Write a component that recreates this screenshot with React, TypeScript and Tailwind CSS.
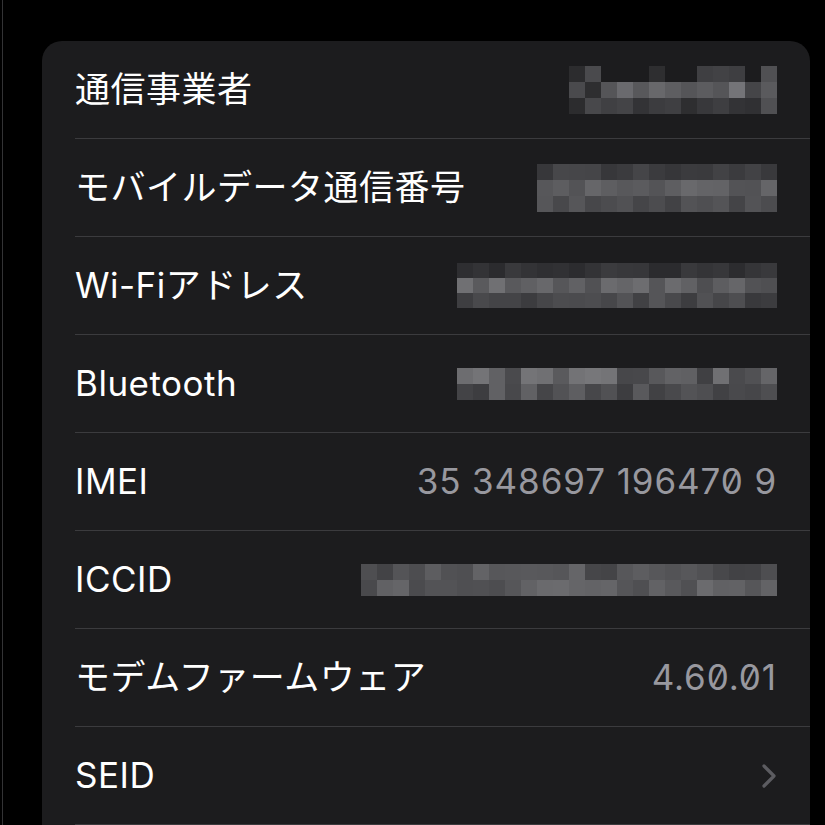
const carrier = [
  ["#2c2c2e", "#4a4a4d", "", "", "", "#2e2e30", "", "", "#3f3f42", "#424245", "#3e3e41", "", "#505053"],
  ["#4a4a4d", "#2e2e30", "#555558", "#6a6a6e", "#58585b", "#68686b", "#5e5e61", "#555558", "#5c5c5f", "#555558", "#747478", "#454548", "#5a5a5d"],
  ["#2c2c2e", "#48484b", "#404043", "#444447", "#333336", "#3c3c3f", "#3f3f42", "#2e2e30", "#38383b", "#3e3e41", "#333336", "#303033", "#505053"],
];

function noise(seed: number, i: number) {
  const x = Math.sin(seed * 97.3 + i * 13.71) * 10000;
  return x - Math.floor(x);
}

function gray(v: number) {
  const n = Math.round(v);
  const h = n.toString(16).padStart(2, "0");
  return `#${h}${h}${(n + 3).toString(16).padStart(2, "0")}`;
}

function Mosaic({
  seed,
  cols,
  rows,
  cell = 16,
}: {
  seed: number;
  cols: number;
  rows: [number, number][];
  cell?: number;
}) {
  return (
    <div className="flex flex-col">
      {rows.map(([lo, hi], r) => (
        <div key={r} className="flex">
          {Array.from({ length: cols }).map((_, c) => (
            <div
              key={c}
              style={{
                width: 16,
                height: cell,
                backgroundColor: gray(lo + (hi - lo) * noise(seed + r * 3, c)),
              }}
            />
          ))}
        </div>
      ))}
    </div>
  );
}

function CarrierMosaic() {
  return (
    <div className="flex flex-col">
      {carrier.map((row, r) => (
        <div key={r} className="flex">
          {row.map((c, i) => (
            <div
              key={i}
              className="w-4 h-4"
              style={{ backgroundColor: c || "transparent" }}
            />
          ))}
        </div>
      ))}
    </div>
  );
}

function Chevron() {
  return (
    <svg width="16" height="26" viewBox="0 0 16 26" fill="none">
      <path
        d="M3 3 L13 13 L3 23"
        stroke="#5c5c61"
        strokeWidth="3.2"
        strokeLinecap="round"
        strokeLinejoin="round"
      />
    </svg>
  );
}

const rows: { label: string; value: React.ReactNode }[] = [
  { label: "通信事業者", value: <CarrierMosaic /> },
  {
    label: "モバイルデータ通信番号",
    value: <Mosaic seed={2} cols={15} rows={[[0x36, 0x4a], [0x4c, 0x6a], [0x3c, 0x56]]} />,
  },
  {
    label: "Wi-Fiアドレス",
    value: <Mosaic seed={5} cols={20} cell={15} rows={[[0x26, 0x3c], [0x48, 0x70], [0x38, 0x58]]} />,
  },
  {
    label: "Bluetooth",
    value: <Mosaic seed={9} cols={20} rows={[[0x40, 0x78], [0x3c, 0x62]]} />,
  },
  {
    label: "IMEI",
    value: <span className="text-[#98989f] slashed-zero tracking-[0.9px]">35 348697 196470 9</span>,
  },
  {
    label: "ICCID",
    value: <Mosaic seed={13} cols={26} rows={[[0x40, 0x66], [0x48, 0x6c]]} />,
  },
  {
    label: "モデムファームウェア",
    value: <span className="text-[#98989f] slashed-zero tracking-[0.9px]">4.60.01</span>,
  },
  { label: "SEID", value: <Chevron /> },
];

export default function App() {
  return (
    <div
      className="h-[825px] w-[825px] overflow-hidden bg-black flex"
      style={{ fontFamily: 'Inter, "Noto Sans CJK JP", sans-serif' }}
    >
      <div className="w-[2px]" />
      <div className="w-px bg-[#333335]" />
      <div className="ml-[39px] mt-[41px] w-[768px] rounded-t-[20px] bg-[#1c1c1e] pl-[33px] self-start">
        {rows.map((row) => (
          <div
            key={row.label}
            className="h-[98px] flex items-center justify-between pr-[33px] border-b border-[#3b3b3e] text-[35px] text-white"
          >
            <span className="tracking-[0.5px]">{row.label}</span>
            {row.value}
          </div>
        ))}
      </div>
    </div>
  );
}
